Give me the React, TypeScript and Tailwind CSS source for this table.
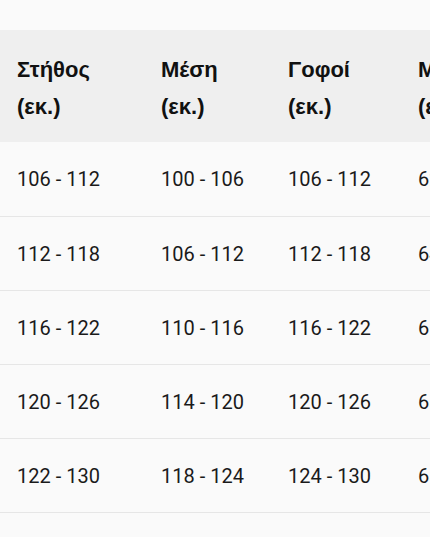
import React from "react"

const headers = [
  ["Στήθος", "(εκ.)"],
  ["Μέση", "(εκ.)"],
  ["Γοφοί", "(εκ.)"],
  ["Μήκος", "(εκ.)"],
]

const rows = [
  ["106 - 112", "100 - 106", "106 - 112", "62 - 64"],
  ["112 - 118", "106 - 112", "112 - 118", "64 - 66"],
  ["116 - 122", "110 - 116", "116 - 122", "66 - 68"],
  ["120 - 126", "114 - 120", "120 - 126", "68 - 70"],
  ["122 - 130", "118 - 124", "124 - 130", "68 - 70"],
  ["128 - 136", "124 - 130", "130 - 136", "70 - 72"],
]

const widths = ["w-[144px]", "w-[127px]", "w-[130px]", "w-[127px]"]

export default function App() {
  return (
    <div className="h-[537px] w-[430px] overflow-hidden bg-[#fafafa] pt-[30px]">
      <table className="w-[528px] table-fixed border-collapse">
        <thead>
          <tr className="bg-[#efefef]">
            {headers.map((h, i) => (
              <th
                key={i}
                className={`${widths[i]} pt-[21px] pb-[17px] pl-[17px] text-left align-middle [font-family:Liberation_Sans,Arial,sans-serif] text-[22px] font-bold leading-[37px] text-[#111]`}
              >
                <span className="block whitespace-nowrap">{h[0]}</span>
                <span className="block whitespace-nowrap">{h[1]}</span>
              </th>
            ))}
          </tr>
        </thead>
        <tbody>
          {rows.map((r, ri) => (
            <tr key={ri} className="h-[74px] border-b border-[#e6e6e6]">
              {r.map((c, ci) => (
                <td
                  key={ci}
                  className="pl-[17px] pt-[1px] align-middle font-['Roboto',sans-serif] text-[20px] whitespace-nowrap text-[#1a1a1a]"
                >
                  {c}
                </td>
              ))}
            </tr>
          ))}
        </tbody>
      </table>
    </div>
  )
}
